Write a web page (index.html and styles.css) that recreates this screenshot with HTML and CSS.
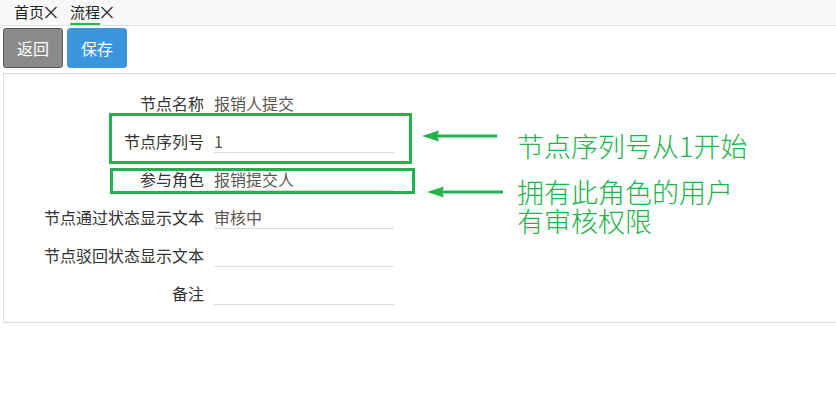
FILE: index.html
```html
<!DOCTYPE html>
<html lang="zh-CN">
<head>
<meta charset="utf-8">
<title>流程</title>
<link rel="stylesheet" href="styles.css">
</head>
<body>
<div class="tabbar">
  <div class="tab">
    <span class="tab-label">首页</span>
    <svg class="tab-close" width="14" height="13" viewBox="0 0 14 13"><path d="M1.5 1 L12.5 12 M12.5 1 L1.5 12" stroke="#333" stroke-width="1.4" fill="none"/></svg>
  </div>
  <div class="tab">
    <span class="tab-label active">流程</span>
    <svg class="tab-close" width="14" height="13" viewBox="0 0 14 13"><path d="M1.5 1 L12.5 12 M12.5 1 L1.5 12" stroke="#333" stroke-width="1.4" fill="none"/></svg>
  </div>
</div>

<div class="toolbar">
  <button class="btn btn-gray">返回</button>
  <button class="btn btn-blue">保存</button>
</div>

<div class="panel">
  <div class="form">
    <div class="label">节点名称</div><div class="field">报销人提交</div>
    <div class="label">节点序列号</div><div class="field">1</div>
    <div class="label">参与角色</div><div class="field">报销提交人</div>
    <div class="label">节点通过状态显示文本</div><div class="field">审核中</div>
    <div class="label">节点驳回状态显示文本</div><div class="field"></div>
    <div class="label">备注</div><div class="field"></div>
  </div>
</div>

<svg class="marks" width="836" height="402" viewBox="0 0 836 402">
  <rect x="110.5" y="114.5" width="300" height="48" fill="none" stroke="#22b14c" stroke-width="3"/>
  <rect x="111.5" y="169.5" width="302" height="23" fill="none" stroke="#22b14c" stroke-width="3"/>
  <line x1="436" y1="136" x2="497" y2="136" stroke="#22b14c" stroke-width="3"/>
  <polygon points="422,136 439,130.5 437,136 439,141.5" fill="#22b14c"/>
  <line x1="441" y1="192" x2="503" y2="192" stroke="#22b14c" stroke-width="3"/>
  <polygon points="427,192 444,186.5 442,192 444,197.5" fill="#22b14c"/>
</svg>
<div class="note note-1">节点序列号从1开始</div>
<div class="note note-2">拥有此角色的用户<br>有审核权限</div>
</body>
</html>
```

FILE: styles.css
```css
html, body {
  margin: 0;
  padding: 0;
  background: #fff;
}
body {
  width: 836px;
  height: 402px;
  overflow: hidden;
  position: relative;
  font-family: "Noto Sans CJK SC", "Microsoft YaHei", sans-serif;
  color: #333;
}

.tabbar {
  height: 25px;
  background: #f8f8f8;
  border-bottom: 1px solid #e2e2e0;
  display: flex;
  padding-left: 14px;
  gap: 12px;
}
.tab {
  display: flex;
  align-items: flex-start;
}
.tab-label {
  font-size: 15px;
  line-height: 23px;
  height: 23px;
  border-bottom: 2px solid transparent;
  color: #222;
}
.tab-label.active {
  border-bottom-color: #2db84d;
}
.tab-close {
  margin-top: 6px;
}

.toolbar {
  display: flex;
  gap: 4px;
  padding: 2px 0 0 3px;
}
.btn {
  width: 60px;
  height: 40px;
  box-sizing: border-box;
  border-radius: 3px;
  font-family: inherit;
  font-size: 16px;
  color: #fff;
  padding: 0;
  cursor: pointer;
}
.btn-gray {
  background: #8b8b8b;
  border: 1px solid #565656;
}
.btn-blue {
  background: #3b95dc;
  border: 1px solid #3b95dc;
}

.panel {
  margin: 5px 0 0 3px;
  width: 832px;
  border: 1px solid #dcdcdc;
  border-right: none;
  padding: 18px 0 17px;
}
.form {
  display: grid;
  grid-template-columns: 200px 180px;
  column-gap: 10px;
  row-gap: 15px;
}
.label {
  text-align: right;
  font-size: 16px;
  line-height: 22px;
  height: 22px;
  color: #333;
  white-space: nowrap;
}
.field {
  font-size: 16px;
  line-height: 22px;
  height: 22px;
  border-bottom: 1px solid #dcdcdc;
  color: #5a5550;
}

.marks {
  position: absolute;
  left: 0;
  top: 0;
  pointer-events: none;
}
.note {
  position: absolute;
  left: 517px;
  font-size: 27px;
  line-height: 29px;
  color: #22b14c;
  font-weight: 300;
  white-space: nowrap;
}
.note-1 { top: 131px; }
.note-2 { top: 177px; }
```
